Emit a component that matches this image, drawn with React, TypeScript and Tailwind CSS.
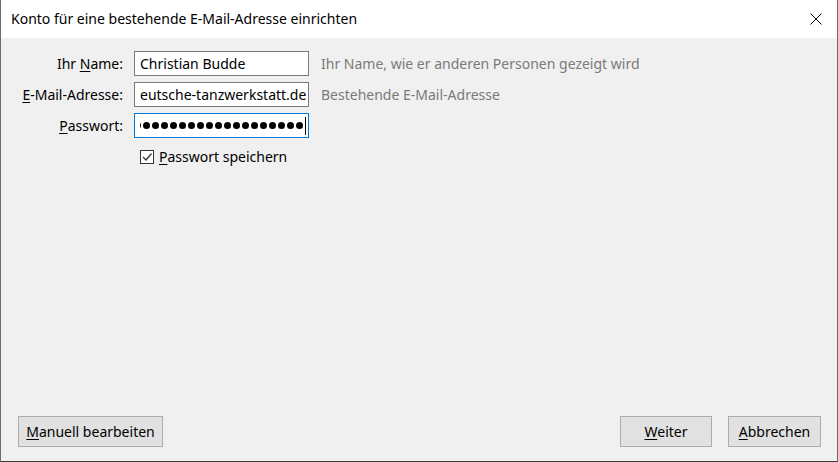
import React from "react";

const font = { fontFamily: '"Noto Sans", "Open Sans", sans-serif' };

const Underlined = ({ text }: { text: string }) => (
  <>
    <span className="underline underline-offset-2">{text[0]}</span>
    {text.slice(1)}
  </>
);

const App: React.FC = () => {
  return (
    <div
      className="w-[838px] h-[462px] flex flex-col bg-[#f0f0f0] border-x border-b border-x-[#6b6b6b] border-b-[#3a3a3a] text-[14px] text-black overflow-hidden"
      style={font}
    >
      {/* title bar */}
      <div className="h-[38px] shrink-0 bg-white flex items-center justify-between pl-[10px] pr-[13px]">
        <span className="text-[14px] leading-none">Konto für eine bestehende E-Mail-Adresse einrichten</span>
        <svg width="12" height="12" viewBox="0 0 12 12" className="mr-[2px]">
          <path d="M0.5 0.5 L11.5 11.5 M11.5 0.5 L0.5 11.5" stroke="#000" strokeWidth="1" />
        </svg>
      </div>

      {/* form */}
      <div className="flex-1 flex flex-col pt-[13px]">
        <div className="grid grid-cols-[122px_186px_1fr] gap-y-[6px] items-center">
          <label className="text-right">
            Ihr <Underlined text="Name" />:
          </label>
          <div className="ml-[11px] h-[25px] w-[175px] bg-white border border-[#7a7a7a] flex items-center px-[5px] overflow-hidden whitespace-nowrap">
            Christian Budde
          </div>
          <span className="ml-[12px] text-[#7a7a7a]">Ihr Name, wie er anderen Personen gezeigt wird</span>

          <label className="text-right">
            <Underlined text="E-Mail-Adresse" />:
          </label>
          <div className="ml-[11px] h-[25px] w-[175px] bg-white border border-[#7a7a7a] flex items-center px-[5px] overflow-hidden whitespace-nowrap">
            eutsche-tanzwerkstatt.de
          </div>
          <span className="ml-[12px] text-[#7a7a7a]">Bestehende E-Mail-Adresse</span>

          <label className="text-right">
            <Underlined text="Passwort" />:
          </label>
          <div className="ml-[11px] h-[25px] w-[175px] bg-white border border-[#0078d7] flex items-center pr-[2px] pl-[5px]">
            <div className="flex-1 flex justify-end overflow-hidden">
              <div className="flex gap-[2px] shrink-0">
                {Array.from({ length: 19 }).map((_, i) => (
                  <span key={i} className="w-[7px] h-[7px] rounded-full bg-black shrink-0" />
                ))}
              </div>
            </div>
            <span className="w-px h-[18px] bg-black ml-[2px] shrink-0" />
          </div>
          <span />
        </div>

        <div className="flex items-center mt-[8px] ml-[139px] gap-[5px]">
          <div className="w-[14px] h-[14px] border border-[#333] bg-white flex items-center justify-center">
            <svg width="10" height="10" viewBox="0 0 10 10">
              <path d="M1 5 L4 8 L9.5 1.5" fill="none" stroke="#333" strokeWidth="1.2" />
            </svg>
          </div>
          <span>
            <Underlined text="Passwort" /> speichern
          </span>
        </div>

        <div className="flex-1" />

        {/* buttons */}
        <div className="flex items-center justify-between pl-[17px] pr-[16px] pb-[14px]">
          <button className="h-[31px] px-[7px] w-[145px] bg-[#e1e1e1] border border-[#adadad]">
            <Underlined text="Manuell bearbeiten" />
          </button>
          <div className="flex gap-[16px]">
            <button className="h-[31px] w-[92px] bg-[#e1e1e1] border border-[#adadad]">
              <Underlined text="Weiter" />
            </button>
            <button className="h-[31px] w-[93px] bg-[#e1e1e1] border border-[#adadad]">
              <Underlined text="Abbrechen" />
            </button>
          </div>
        </div>
      </div>
    </div>
  );
};

export default App;
